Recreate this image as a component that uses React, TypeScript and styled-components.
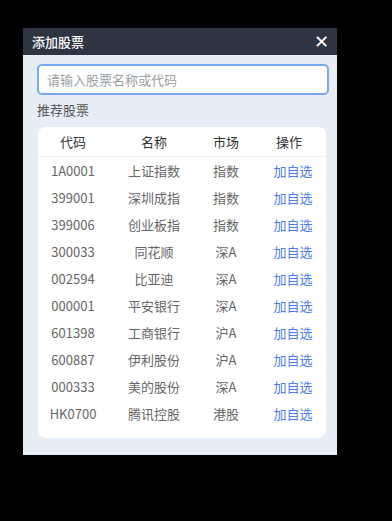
import React from 'react'
import styled, { createGlobalStyle } from 'styled-components'

const GlobalStyle = createGlobalStyle`
  html, body {
    margin: 0;
    padding: 0;
    background: #000;
    font-family: "Noto Sans CJK SC", "Noto Sans", sans-serif;
  }
`

const Page = styled.div`
  width: 392px;
  height: 521px;
  padding: 28px 0 0 23px;
  box-sizing: border-box;
`

const Dialog = styled.div`
  width: 314px;
  background: #e8eef5;
`

const Header = styled.div`
  height: 27px;
  background: #2e3440;
  display: flex;
  align-items: center;
  justify-content: space-between;
  padding: 0 8px 0 9px;
  color: #fff;
`

const Title = styled.span`
  font-size: 13px;
  font-weight: 500;
`

const Close = styled.span`
  font-size: 18px;
  font-weight: bold;
  line-height: 1;
  font-family: "DejaVu Sans", sans-serif;
`

const Body = styled.div`
  padding: 9px 8px 17px 14px;
`

const Search = styled.input`
  display: block;
  width: 292px;
  height: 31px;
  box-sizing: border-box;
  border: 2px solid #7aa7f7;
  border-radius: 5px;
  padding: 0 8px;
  font-family: inherit;
  font-size: 13px;
  outline: none;
  background: #fff;
  &::placeholder {
    color: #9aa0a8;
  }
`

const Label = styled.div`
  margin: 6px 0 8px 0;
  font-size: 13px;
  color: #555;
  line-height: 18px;
`

const Card = styled.div`
  margin-left: 1px;
  width: 288px;
  background: #fff;
  border-radius: 8px;
  padding-bottom: 11px;
`

const Row = styled.div<{ $head?: boolean }>`
  display: grid;
  grid-template-columns: 70px 92px 52px 74px;
  height: ${p => (p.$head ? '29px' : '27px')};
  align-items: center;
  text-align: center;
  font-size: 13px;
  color: ${p => (p.$head ? '#333' : '#666')};
  border-bottom: ${p => (p.$head ? '1px solid #eef1f5' : 'none')};
`

const Link = styled.span`
  color: #4d7cf5;
  padding-left: 8px;
`

const stocks = [
  ['1A0001', '上证指数', '指数'],
  ['399001', '深圳成指', '指数'],
  ['399006', '创业板指', '指数'],
  ['300033', '同花顺', '深A'],
  ['002594', '比亚迪', '深A'],
  ['000001', '平安银行', '深A'],
  ['601398', '工商银行', '沪A'],
  ['600887', '伊利股份', '沪A'],
  ['000333', '美的股份', '深A'],
  ['HK0700', '腾讯控股', '港股'],
]

export default function App() {
  return (
    <Page>
      <GlobalStyle />
      <Dialog>
        <Header>
          <Title>添加股票</Title>
          <Close>✕</Close>
        </Header>
        <Body>
          <Search placeholder="请输入股票名称或代码" />
          <Label>推荐股票</Label>
          <Card>
            <Row $head>
              <span>代码</span>
              <span>名称</span>
              <span>市场</span>
              <span>操作</span>
            </Row>
            {stocks.map(([code, name, market]) => (
              <Row key={code}>
                <span>{code}</span>
                <span>{name}</span>
                <span>{market}</span>
                <Link>加自选</Link>
              </Row>
            ))}
          </Card>
        </Body>
      </Dialog>
    </Page>
  )
}
